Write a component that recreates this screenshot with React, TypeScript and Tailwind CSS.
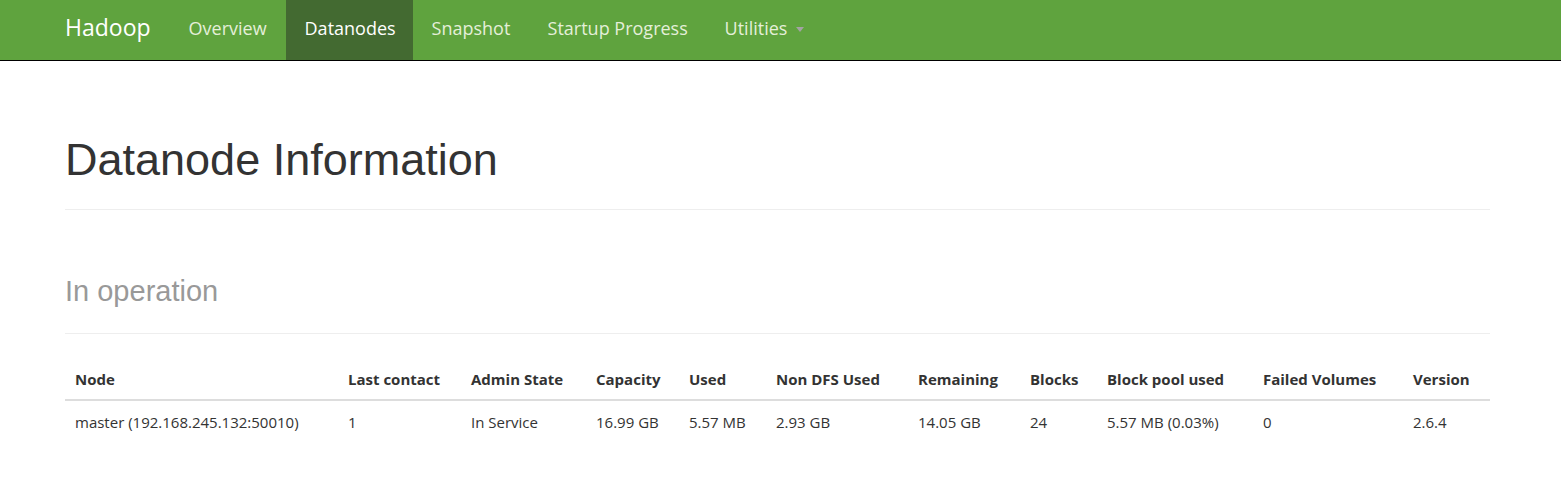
import React from "react";

const navLinks = [
  { label: "Overview", w: "w-[116px]", active: false },
  { label: "Datanodes", w: "w-[127px]", active: true },
  { label: "Snapshot", w: "w-[116px]", active: false },
  { label: "Startup Progress", w: "w-[177px]", active: false },
];

const cols = [
  { h: "Node", v: "master (192.168.245.132:50010)", w: "w-[273px]" },
  { h: "Last contact", v: "1", w: "w-[123px]" },
  { h: "Admin State", v: "In Service", w: "w-[125px]" },
  { h: "Capacity", v: "16.99 GB", w: "w-[93px]" },
  { h: "Used", v: "5.57 MB", w: "w-[87px]" },
  { h: "Non DFS Used", v: "2.93 GB", w: "w-[142px]" },
  { h: "Remaining", v: "14.05 GB", w: "w-[112px]" },
  { h: "Blocks", v: "24", w: "w-[77px]" },
  { h: "Block pool used", v: "5.57 MB (0.03%)", w: "w-[156px]" },
  { h: "Failed Volumes", v: "0", w: "w-[150px]" },
  { h: "Version", v: "2.6.4", w: "w-[87px]" },
];

export default function App() {
  return (
    <div className="min-h-[492px] w-full bg-white">
      <nav className="flex h-[61px] border-b border-black bg-[#5fa33e] pl-[46px] font-['Open_Sans',sans-serif]">
        <div className="h-[60px] px-[19px] pt-[13px] text-[23px] leading-[28px] text-white">
          Hadoop
        </div>
        {navLinks.map((l) => (
          <div
            key={l.label}
            className={
              l.active
                ? `${l.w} h-[60px] bg-[#436a31] pl-[19px] pt-[17px] text-[18px] leading-[22px] text-white`
                : `${l.w} h-[60px] pl-[19px] pt-[17px] text-[18px] leading-[22px] text-[#e4efd9]`
            }
          >
            {l.label}
          </div>
        ))}
        <div className="flex h-[60px] items-start pl-[19px] pt-[17px] text-[18px] leading-[22px] text-[#e4efd9]">
          <span>Utilities</span>
          <span className="ml-[9px] mt-[10px] inline-block h-0 w-0 border-x-[4px] border-t-[5px] border-x-transparent border-t-[#a3a3a3]" />
        </div>
      </nav>

      <main className="ml-[65px] w-[1425px]">
        <div className="mt-[74px] border-b border-[#eeeeee] pb-[24px]">
          <h1 className="font-['Liberation_Sans',Arial,sans-serif] text-[45px] leading-[50px] text-[#333333]">
            Datanode Information
          </h1>
        </div>
        <div className="mt-[65px] border-b border-[#eeeeee] pb-[26px]">
          <h2 className="font-['Liberation_Sans',Arial,sans-serif] text-[29px] leading-[32px] text-[#999999]">
            In operation
          </h2>
        </div>

        <table className="mt-[24px] w-[1425px] table-fixed border-collapse font-['Open_Sans',sans-serif] text-[15px] text-[#333333]">
          <thead>
            <tr className="border-b-2 border-[#dddddd]">
              {cols.map((c) => (
                <th
                  key={c.h}
                  className={`${c.w} px-[10px] pb-[9px] pt-[10px] text-left font-bold leading-[22px]`}
                >
                  {c.h}
                </th>
              ))}
            </tr>
          </thead>
          <tbody>
            <tr>
              {cols.map((c) => (
                <td key={c.h} className="px-[10px] py-[10px] text-left leading-[22px]">
                  {c.v}
                </td>
              ))}
            </tr>
          </tbody>
        </table>
      </main>
    </div>
  );
}
